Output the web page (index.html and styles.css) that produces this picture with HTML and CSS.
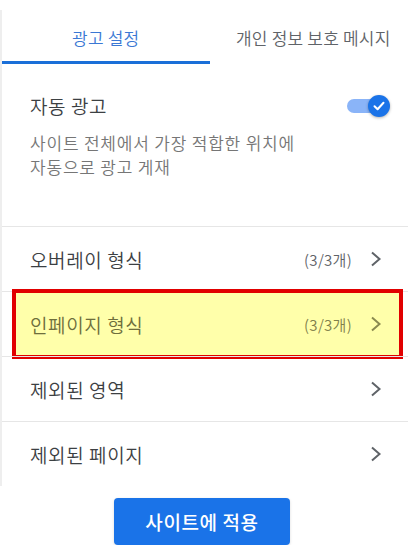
FILE: index.html
```html
<!DOCTYPE html>
<html>
  <head>
    <meta charset="utf-8" />
    <title>광고 설정</title>
    <link rel="stylesheet" href="styles.css">
  </head>

  <body>
    <div class="panel">
      <div class="tabs">
        <div class="tab tab-active">광고 설정</div>
        <div class="tab">개인 정보 보호 메시지</div>
      </div>

      <div class="auto">
        <div class="auto-head">
          <span class="auto-title">자동 광고</span>
          <span class="toggle">
            <span class="toggle-track"></span>
            <span class="toggle-knob">
              <svg width="14" height="14" viewBox="0 0 14 14">
                <polyline points="2.5,7.2 5.6,10.2 11.5,3.8" fill="none" stroke="#fff" stroke-width="2" stroke-linecap="round" stroke-linejoin="round" />
              </svg>
            </span>
          </span>
        </div>
        <p class="auto-desc">사이트 전체에서 가장 적합한 위치에<br>자동으로 광고 게재</p>
      </div>

      <ul class="rows">
        <li class="row">
          <span class="row-label">오버레이 형식</span>
          <span class="row-count">(3/3개)</span>
          <svg class="chev" width="12" height="16" viewBox="0 0 12 16"><polyline points="2,1.5 9.5,8 2,14.5" /></svg>
        </li>
        <li class="row row-mark">
          <span class="row-label">인페이지 형식</span>
          <span class="row-count">(3/3개)</span>
          <svg class="chev" width="12" height="16" viewBox="0 0 12 16"><polyline points="2,1.5 9.5,8 2,14.5" /></svg>
        </li>
        <li class="row">
          <span class="row-label">제외된 영역</span>
          <svg class="chev" width="12" height="16" viewBox="0 0 12 16"><polyline points="2,1.5 9.5,8 2,14.5" /></svg>
        </li>
        <li class="row">
          <span class="row-label">제외된 페이지</span>
          <svg class="chev" width="12" height="16" viewBox="0 0 12 16"><polyline points="2,1.5 9.5,8 2,14.5" /></svg>
        </li>
      </ul>
    </div>

    <div class="actions">
      <button class="apply">사이트에 적용</button>
    </div>
  </body>
</html>
```

FILE: styles.css
```css
* {
  margin: 0;
  padding: 0;
  box-sizing: border-box;
}

body {
  width: 417px;
  background-color: #fff;
  font-family: "Noto Sans CJK KR", "Noto Sans", sans-serif;
  font-weight: 350;
  color: #3c4043;
}

.panel {
  margin-top: 10px;
  border-left: 2px solid #eeeeee;
}

.tabs {
  display: flex;
}

.tab {
  flex: 1;
  height: 54px;
  padding-top: 18px;
  border-bottom: 3px solid transparent;
  font-size: 17px;
  letter-spacing: 0.2px;
  line-height: 20px;
  text-align: center;
  color: #5f6368;
}

.tab-active {
  color: #3b78d4;
  border-bottom-color: #1a6fd8;
}

.auto {
  padding: 30px 27px 47px 28px;
  margin-right: 9px;
  border-bottom: 1px solid #e6e6e6;
}

.auto-head {
  display: flex;
  align-items: center;
  justify-content: space-between;
  margin-right: -9px;
  height: 24px;
}

.auto-title {
  font-size: 19px;
  letter-spacing: 0.6px;
  line-height: 24px;
  color: #3c4043;
}

.toggle {
  position: relative;
  width: 43px;
  height: 22px;
}

.toggle-track {
  position: absolute;
  left: 0;
  top: 4px;
  width: 34px;
  height: 14px;
  border-radius: 7px;
  background-color: #8ab4f8;
}

.toggle-knob {
  position: absolute;
  right: 0;
  top: 0;
  width: 22px;
  height: 22px;
  border-radius: 50%;
  background-color: #1a73e8;
  box-shadow: 0 1px 3px rgba(0, 0, 0, 0.3);
  display: flex;
  align-items: center;
  justify-content: center;
}

.auto-desc {
  margin-top: 13px;
  font-size: 17px;
  letter-spacing: 0.8px;
  line-height: 24px;
  color: #767676;
}

.rows {
  list-style: none;
  margin-right: 9px;
}

.row {
  position: relative;
  display: flex;
  align-items: center;
  height: 65px;
  padding: 0 26px 0 28px;
  border-top: 1px solid #e6e6e6;
}

.row:first-child {
  border-top: none;
  height: 64px;
}

.row-label {
  flex: 1;
  font-size: 19px;
  letter-spacing: 0.6px;
  color: #3c4043;
}

.row-count {
  margin-right: 18px;
  font-size: 15px;
  letter-spacing: 0.3px;
  color: #5f6368;
}

.chev {
  display: block;
}

.chev polyline {
  fill: none;
  stroke: #5f6368;
  stroke-width: 2;
}

.row-mark::before {
  content: "";
  position: absolute;
  left: 10px;
  right: 5px;
  top: -3px;
  bottom: -3px;
  border: 4px solid #e10000;
  background-color: #ffffaa;
}

.row-mark > * {
  position: relative;
}

.row-mark .row-label {
  color: #6e6e3c;
}

.row-mark .row-count {
  color: #80804a;
}

.row-mark .chev polyline {
  stroke: #8a8a50;
}

.actions {
  width: 404px;
  display: flex;
  justify-content: center;
  padding-top: 12px;
}

.apply {
  width: 176px;
  height: 47px;
  border: none;
  border-radius: 4px;
  background-color: #1a73e8;
  color: #fff;
  font-family: "Noto Sans CJK KR", "Noto Sans", sans-serif;
  font-size: 19px;
  letter-spacing: 0.6px;
  font-weight: 500;
  box-shadow: 0 1px 3px rgba(0, 0, 0, 0.15);
}
```
